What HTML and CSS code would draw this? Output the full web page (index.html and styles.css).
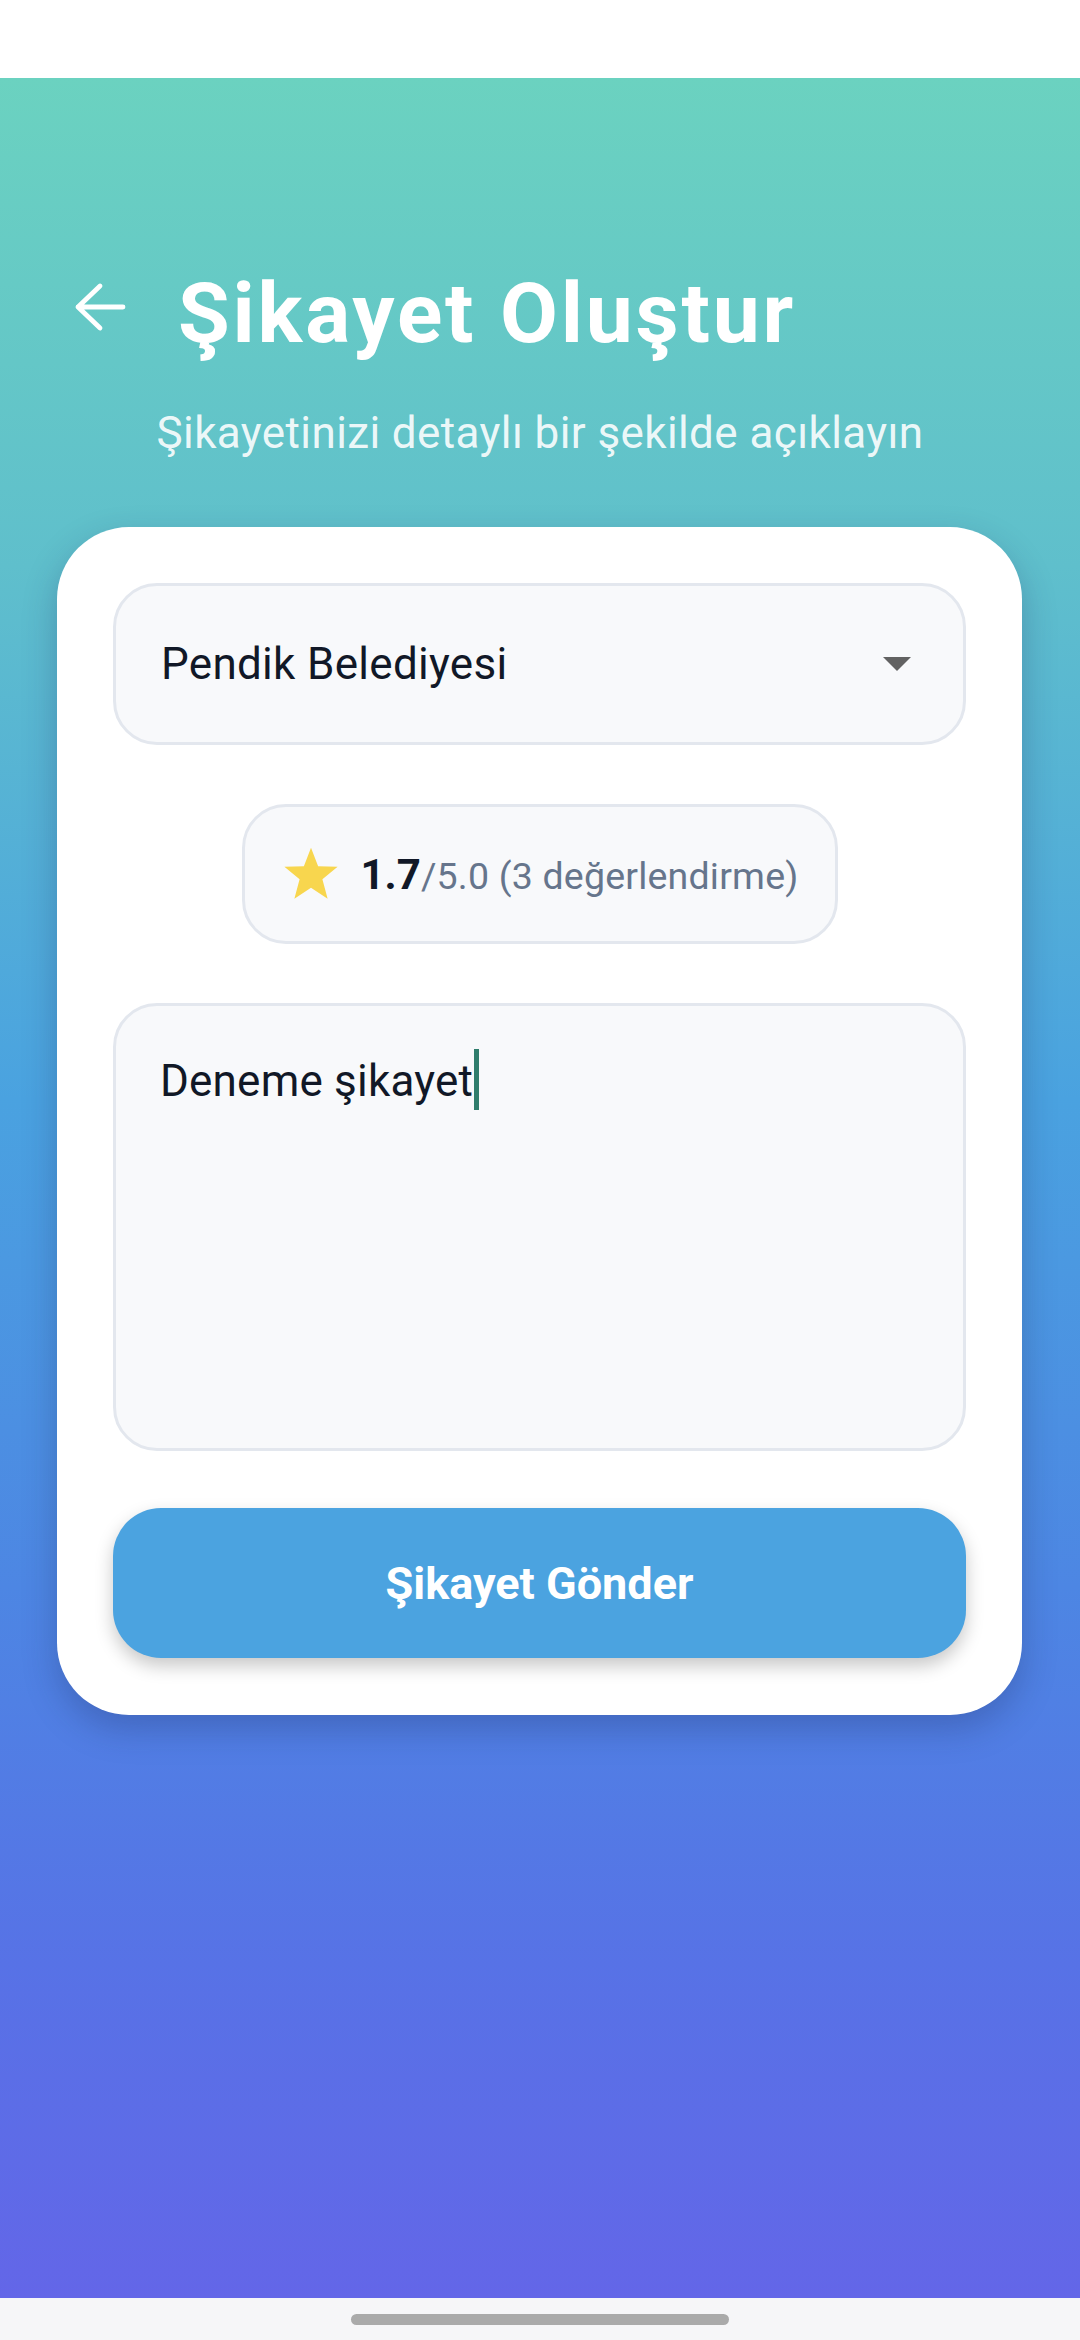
FILE: index.html
```html
<!DOCTYPE html>
<html lang="tr">
<head>
<meta charset="utf-8">
<title>Şikayet Oluştur</title>
<link rel="stylesheet" href="styles.css">
</head>
<body>
<div class="screen">
  <div class="status-bar"></div>
  <main class="main">
    <header class="header">
      <svg class="back" viewBox="0 0 60 60" width="60" height="60" aria-hidden="true">
        <path d="M8 30 H53 M30 9 L8 30 L30 51" fill="none" stroke="#ffffff" stroke-width="4.8" stroke-linecap="round" stroke-linejoin="round"/>
      </svg>
      <h1 class="title">Şikayet Oluştur</h1>
    </header>
    <p class="subtitle">Şikayetinizi detaylı bir şekilde açıklayın</p>

    <section class="card">
      <div class="select">
        <span class="select-text">Pendik Belediyesi</span>
        <span class="caret-down"></span>
      </div>

      <div class="rating">
        <svg class="star" viewBox="0 0 24 24" width="60" height="57" aria-hidden="true">
          <path d="M12 1.2 L15 8.9 L23.2 9.2 L16.8 14.4 L19 22.6 L12 18 L5 22.6 L7.2 14.4 L0.8 9.2 L9 8.9 Z" fill="#f8d64e"/>
        </svg>
        <span class="rating-text"><span class="rating-value">1.7</span><span class="rating-rest">/5.0 (3 değerlendirme)</span></span>
      </div>

      <div class="textarea">
        <span class="typed">Deneme şikayet</span><span class="cursor"></span>
      </div>

      <button class="submit" type="button">Şikayet Gönder</button>
    </section>
  </main>
  <div class="nav-bar"><span class="handle"></span></div>
</div>
</body>
</html>
```
FILE: styles.css
```css
* { box-sizing: border-box; }

html, body {
  margin: 0;
  padding: 0;
}

body {
  width: 1080px;
  height: 2340px;
  font-family: Roboto, "Noto Sans", "Liberation Sans", sans-serif;
  overflow: hidden;
}

.screen {
  display: flex;
  flex-direction: column;
  width: 1080px;
  height: 2340px;
}

.status-bar {
  height: 78px;
  background: #ffffff;
  flex: none;
}

.main {
  flex: 1;
  display: flex;
  flex-direction: column;
  background: linear-gradient(180deg, #6bd2c0 0%, #5fbfcc 22%, #4aa2e0 46%, #4d86e3 68%, #5772e6 85%, #6366e8 100%);
  padding-top: 186px;
}

.header {
  display: flex;
  align-items: flex-start;
  padding-left: 70px;
  height: 100px;
}

.back {
  margin-top: 13px;
  flex: none;
}

.title {
  margin: 0 0 0 48px;
  font-size: 84px;
  line-height: 100px;
  font-weight: 700;
  letter-spacing: 2.8px;
  color: #ffffff;
}

.subtitle {
  margin: 43px 0 0;
  text-align: center;
  font-size: 44px;
  line-height: 52px;
  color: rgba(255, 255, 255, 0.9);
  letter-spacing: 0.4px;
}

.card {
  margin: 68px 58px 0 57px;
  background: #ffffff;
  border-radius: 72px;
  padding: 56px 56px 57px;
  display: flex;
  flex-direction: column;
  box-shadow: 0 14px 34px rgba(30, 40, 90, 0.28);
}

.select {
  height: 162px;
  border: 3px solid #e3e7ee;
  background: #f8f9fb;
  border-radius: 44px;
  display: flex;
  align-items: center;
  justify-content: space-between;
  padding: 0 52px 0 45px;
}

.select-text {
  font-size: 44px;
  letter-spacing: 0.3px;
  color: #111827;
}

.caret-down {
  width: 0;
  height: 0;
  border-left: 14px solid transparent;
  border-right: 14px solid transparent;
  border-top: 14px solid #626262;
}

.rating {
  align-self: center;
  margin-top: 59px;
  height: 140px;
  display: flex;
  align-items: center;
  gap: 20px;
  padding: 0 36px 0 36px;
  border: 3px solid #e3e7ee;
  background: #f8f9fb;
  border-radius: 44px;
}

.star { flex: none; margin-top: -2px; }

.rating-text {
  white-space: nowrap;
}

.rating-value {
  font-size: 42px;
  font-weight: 700;
  color: #111827;
}

.rating-rest {
  font-size: 37.5px;
  letter-spacing: 0.2px;
  color: #66758c;
}

.textarea {
  margin-top: 59px;
  height: 448px;
  border: 3px solid #e3e7ee;
  background: #f8f9fb;
  border-radius: 44px;
  padding: 43px 44px 0;
  font-size: 44px;
  line-height: 60px;
  letter-spacing: 0.2px;
  color: #111827;
}

.cursor {
  display: inline-block;
  width: 5px;
  height: 61px;
  background: #2f7d6c;
  vertical-align: -14px;
  margin-left: 1px;
}

.submit {
  margin-top: 57px;
  height: 150px;
  border: none;
  border-radius: 48px;
  background: #4ba3e0;
  color: #ffffff;
  font-family: Roboto, "Noto Sans", "Liberation Sans", sans-serif;
  font-size: 45px;
  font-weight: 700;
  box-shadow: 0 8px 18px rgba(0, 0, 0, 0.22);
}

.nav-bar {
  height: 42px;
  flex: none;
  background: #f6f6f8;
  display: flex;
  justify-content: center;
  padding-top: 16px;
}

.handle {
  width: 378px;
  height: 11px;
  border-radius: 6px;
  background: #aaaaaa;
}
```
